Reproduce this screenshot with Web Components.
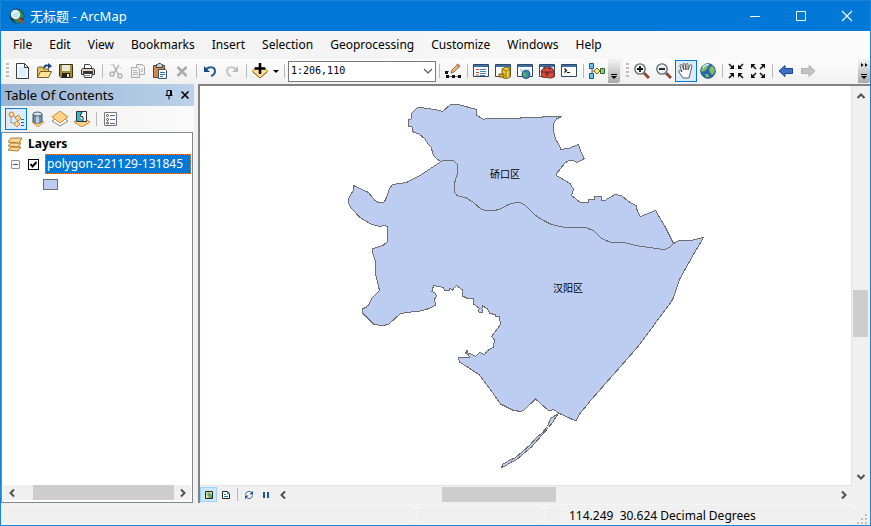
<!DOCTYPE html>
<html lang="zh">
<head>
<meta charset="utf-8">
<title>无标题 - ArcMap</title>
<style>
html, body { height: 100%; margin: 0; }
body { font: 12px/20px "Noto Sans", "Noto Sans CJK SC", sans-serif; color: #000; background: #f0f0f0; }
</style>
</head>
<body>
<app-window></app-window>
<script>
const D = (inner) => `<path d="M1 1h14v13H1z" fill="#fff"/><path d="M1 1h14v3H1z" fill="#3c6fae"/><path d="M.500 1.500h15v12h-15z" fill="none" stroke="#31465f"/>${inner}`;
const CYL = '<path d="M3 3v7c0 3 9 3 9 0V3" fill="#6d8bab" stroke="#44566c"/><path d="M6 4v8h3V4" fill="#b9cee2"/><ellipse cx="7.500" cy="3" rx="4.500" ry="2" fill="#d9e6f2" stroke="#44566c"/>';
const ICONS = {
  app: '<circle cx="8" cy="8" r="7.500" fill="#174e63"/><path d="M3 2l5 1 4-1 3 6-3 6-4 1-5-4z" fill="#318758"/><path d="M1 7l4-1 1 6-3 1zM10 9l4 2-3 3z" fill="#103654"/><path d="M9 9l5 6" stroke="#c7452d" stroke-width="2"/><circle cx="6.500" cy="6.500" r="4" fill="#b8e7ed" stroke="#e9f5f1" stroke-width="1.500"/><path d="M4 6c1-2 3-2 4-2" stroke="#fff" fill="none"/>',
  new: '<path d="M2.500.500h8l4 4v11h-12z" fill="#f4fbff" stroke="#383c45"/><path d="M5 4h7v10H5z" fill="#dceefb"/><path d="M10.500.500v4h4z" fill="#fff" stroke="#383c45"/>',
  open: '<path d="M1.500 14V5l1-1h4l1 2h5v3" fill="#e6c263" stroke="#795c22"/><path d="M1.500 14.500l3-6h11l-3 6z" fill="#ffe397" stroke="#795c22"/><path d="M8 5c1-3 3-3 4-2" fill="none" stroke="#19446f" stroke-width="2"/><path d="M12 0l4 3-4 3z" fill="#19446f"/>',
  save: '<path d="M1.500 1.500h13v13H3l-1.500-1.500z" fill="#a48d33" stroke="#38330f"/><path d="M4 2h8v6H4z" fill="#e9e7dc"/><path d="M4 10h8v5H4z" fill="#272319"/><path d="M9 11h2v3H9z" fill="#ebe6cd"/>',
  print: '<path d="M4.500 6V1.500h5l2 2V6" fill="#fff" stroke="#444"/><path d="M1.500 6.500l1-1h11l1 1v5h-13z" fill="#d7d3ca" stroke="#302f2c"/><path d="M3 8h10v2H3z" fill="#353535"/><path d="M3.500 10.500h9l-1 4h-7z" fill="#fff" stroke="#353535"/><path d="M5 12.500h5" stroke="#6f8290"/><path d="M12 7h2" stroke="#d28a32"/>',
  cut: '<g stroke="#b3b3b3" fill="none" stroke-width="1.500"><path d="M5 1l5 10M11 2L6 10"/><circle cx="4" cy="11" r="2"/><circle cx="12" cy="13" r="2"/></g><path d="M2 2h2M12 5h2" stroke="#d0d0d0"/>',
  copy: '<g fill="#f0f0f0" stroke="#aaa"><path d="M6.500 1.500h6l2 2v8h-8z"/><path d="M1.500 4.500h6l2 2v8h-8z"/></g><path d="M3 7.500h4M3 9.500h5M3 11.500h5M11 6.500h2M11 8.500h2" stroke="#b5b5b5"/>',
  paste: '<path d="M1.500 2.500h11v12h-11z" fill="#d48b45" stroke="#684325"/><path d="M4.500 3V1.500h1l1-1h2l1 1h1V4.500h-6z" fill="#c7ced4" stroke="#3c4146"/><path d="M6.500 6.500h7l1 1v8h-8z" fill="#fff" stroke="#38516d"/><path d="M8 9.500h5M8 11.500h5M8 13.500h3" stroke="#376eaa"/>',
  del: '<path d="M3.500 4l9 9M12.500 4l-9 9" stroke="#aaa" stroke-width="2.500"/>',
  undo: '<path d="M4 6c4-3 9-2 9 2 0 2-1 4-4 5" fill="none" stroke="#255d96" stroke-width="2"/><path d="M2 3v6h6z" fill="#174c83"/>',
  redo: '<path d="M12 6C8 3 3 4 3 8c0 2 1 4 4 5" fill="none" stroke="#c6c6c6" stroke-width="2"/><path d="M14 3v6H8z" fill="#bdbdbd"/>',
  add: '<path d="M0 8l8-5 8 5-8 7z" fill="#ffdc91" stroke="#cf963e"/><path d="M1 9l7 6 7-6" fill="none" stroke="#93682e"/><path d="M8 0v11M2.500 5.500h11" stroke="#000" stroke-width="2.500"/>',
  edit: '<path d="M1.500 13.500h13M2 10l2-2" fill="none" stroke="#777"/><path d="M0 8h3v3H0zM1 12h3v3H1zM7 12h3v3H7zM13 12h3v3h-3z" fill="#111"/><path d="M6 10l1-3 6-6 2 2-6 6z" fill="#e9b673" stroke="#6c4b31" stroke-width=".7"/><path d="M12.500.500l3 3-1.500 1.500-3-3z" fill="#d97a72"/>',
  table: D('<path d="M3 6.500h3M3 9.500h3M3 12h3" stroke="#d34a36"/><path d="M7 6.500h6M7 8.500h6M7 10.500h6M7 12.500h5" stroke="#477cbd"/>'),
  catalog: D('<path d="M7 6l4-2 4 1v9l-4 2-4-2z" fill="#f1cd32" stroke="#796119"/><path d="M7 6l4 2v7M11 8l4-2" fill="none" stroke="#8e721c"/><path d="M4 11h5v3H4z" fill="#d7a824" stroke="#796119"/>'),
  search: D('<path d="M3 6h10v3H3z" fill="#c8dceb"/><circle cx="9" cy="11.500" r="4" fill="#338ebe" stroke="#23506b"/><path d="M6 9l3 1 1 3-3 1z" fill="#66ad58"/>'),
  toolbox: D('<path d="M2 8l3-3h8l2 3v6l-3 1-9-1z" fill="#d94b3b" stroke="#712c27"/><path d="M5 6V4h6v3M3 9h11M7 9v3h2V9" fill="none" stroke="#5a211d"/>'),
  python: D('<path d="M3.500 5.500l2 2-2 2" fill="none" stroke="#111" stroke-width="1.300"/><path d="M6 9.500h3" stroke="#111"/>'),
  model: '<path d="M3 3v10M3 8h11" fill="none" stroke="#666"/><path d="M.500.500h4v5h-4zM.500 10.500h4v5h-4z" fill="#6ac3ee" stroke="#165a91"/><path d="M5 8l3-3 3 3-3 3z" fill="#ffe28b" stroke="#8d6618"/><path d="M11.500 5.500h4v5h-4z" fill="#8bcd81" stroke="#31612d"/>',
  zoomin: '<path d="M10 10l5 5" stroke="#8f4938" stroke-width="3"/><circle cx="6" cy="6" r="5.200" fill="#e7f2f4" stroke="#646669" stroke-width="1.300"/><path d="M3 6h6M6 3v6" stroke="#111" stroke-width="1.800"/>',
  zoomout: '<path d="M10 10l5 5" stroke="#8f4938" stroke-width="3"/><circle cx="6" cy="6" r="5.200" fill="#e7f2f4" stroke="#646669" stroke-width="1.300"/><path d="M3 6h6" stroke="#111" stroke-width="1.800"/>',
  pan: '<path d="M5 15L1 9c-1-2 1-2 2-1l1 1-2-6c0-2 2-2 2 0l2 4-1-6c1-1 2-1 2 1l1 5V1c1-1 2-1 2 1v5l2-5c1-1 2 0 2 1l-2 8-1 4z" fill="#fff" stroke="#4b4b4b" stroke-width=".9"/>',
  globe: '<circle cx="8" cy="8" r="7.300" fill="#2b64b0" stroke="#315e82"/><path d="M4 2l4-1 0 3-2 3-4 2-1-2zM10 4l3-1 2 4-2 5-2-1-2-4zM5 11l3 0 1 3-3 0z" fill="#83bf61"/><path d="M3 5c1-3 4-4 6-3" fill="none" stroke="#cbeaf9" stroke-width="1.500"/>',
  zin: '<g fill="#111"><path d="M6 1.500V6H1.500zM10 1.500V6h4.500zM6 14.500V10H1.500zM10 14.500V10h4.500z"/></g><path d="M1 1l4 4M15 1l-4 4M1 15l4-4M15 15l-4-4" stroke="#111" stroke-width="1.500"/>',
  zout: '<g fill="#111"><path d="M1 1h4.500L1 5.500zM15 1h-4.500L15 5.500zM1 15h4.500L1 10.500zM15 15h-4.500l4.500-4.500z"/></g><path d="M2 2l4 4M14 2l-4 4M2 14l4-4M14 14l-4-4" stroke="#111" stroke-width="1.500"/>',
  back: '<path d="M1 8l6-5.500v3h7.500v5H7v3z" fill="#3c70c8" stroke="#1d458f"/>',
  fwd: '<path d="M15 8L9 2.500v3H1.500v5H9v3z" fill="#c3c3c3" stroke="#b1b1b1"/>',
  drawing: '<path d="M3 4v8h5M5 5l5 2" fill="none" stroke="#999"/><circle cx="3.500" cy="3.500" r="2.500" fill="#ffd695" stroke="#c78938"/><path d="M7 7l3-3 3 3-3 3zM6 13l3-3 3 3-3 3z" fill="#ffd695" stroke="#c78938"/><path d="M13 8.500h3M13 11.500h3M13 14.500h3" stroke="#255da0"/>',
  source: '<path d="M2 11l6-2 6 2-6 5z" fill="#ffd582" stroke="#d29a44"/>' + CYL,
  visible: '<path d="M0 10l8-5 8 5-8 5z" fill="#fff" stroke="#888"/><path d="M0 6l8-6 8 6-8 6z" fill="#ffd28a" stroke="#c98c39"/>',
  select: '<path d="M0 11l8-5 8 5-8 5z" fill="#ffd28a" stroke="#c98c39"/><path d="M2.500.500h10v10h-10z" fill="#fff" stroke="#333"/><path d="M3 1h5L6 6l3 4H3z" fill="#35bad1"/><path d="M8 1L6 5l3 1v4" fill="none" stroke="#222"/>',
  options: '<path d="M2.500 1.500h12v13h-12z" fill="#fff" stroke="#777"/><g fill="none" stroke="#444"><circle cx="5.500" cy="4.500" r="1"/><circle cx="5.500" cy="8.500" r="1"/><circle cx="5.500" cy="12" r="1"/></g><path d="M8 4.500h5M8 8.500h5M8 12.500h5" stroke="#4777aa"/>',
  layers: '<g fill="#ffd895" stroke="#b17b33"><path d="M1 14l3-3h10l-3 4z"/><path d="M1 10l3-3h10l-3 4z"/><path d="M1 6l3-4h11l-3 5z"/></g>',
  data: '<path d="M4.500 4.500h7v7h-7z" fill="#dce69b" stroke="#222"/><path d="M6 7l2-2 3 3v3H8z" fill="#70a776"/>',
  page: '<path d="M4.500 4.500h5l2 2v5h-7z" fill="#fff" stroke="#222"/><path d="M9.500 4v3H12M6 7.500h2M6 9.500h4" fill="none" stroke="#2176b7"/>',
  refresh: '<path d="M4.500 7.500C5 4 9.500 3.500 11 6M11.500 8.500c-.5 3.500-5 4-6.500 1.500" fill="none" stroke="#1f4f82"/><path d="M12 4v3.500H8.500zM4 12V8.500h3.500z" fill="#1f4f82"/>',
  pause: '<path d="M5 5h2v6H5zM9 5h2v6H9z" fill="#1854a8"/>',
  pin: '<path d="M6 8.500V3.500h4.500v5M4.500 8.500h7M8 9v3.500M9.500 4v4" fill="none" stroke="#000"/>',
  close: '<path d="M4.500 4.500l7 7M11.500 4.500l-7 7" stroke="#000" stroke-width="1.600"/>',
  min: '<path d="M3 8.500h10" stroke="#fff"/>',
  max: '<path d="M3.500 3.500h9v9h-9z" fill="none" stroke="#fff"/>',
  exit: '<path d="M3 3l10 10M13 3L3 13" stroke="#fff" stroke-width="1.200"/>',
  left: '<path d="M10 4.500L6.500 8l3.500 3.500" fill="none" stroke="#505050" stroke-width="2"/>',
  right: '<path d="M6 4.500L9.500 8 6 11.500" fill="none" stroke="#505050" stroke-width="2"/>',
  up: '<path d="M4.500 10L8 6.500l3.500 3.500" fill="none" stroke="#505050" stroke-width="2"/>',
  down: '<path d="M4.500 6L8 9.500 11.500 6" fill="none" stroke="#505050" stroke-width="2"/>',
  chevron: '<path d="M4 6l4 4 4-4" fill="none" stroke="#555" stroke-width="1.200"/>',
  caret: '<path d="M5 7h6l-3 3z" fill="#000"/>',
  more: '<path d="M5 11.500h6" stroke="#000"/><path d="M5 13h6l-3 3z" fill="#000"/>',
  chevmore: '<path d="M5 0l2.500 2L5 4zM9 0l2.500 2L9 4z" fill="#000"/><path d="M5 11.500h6" stroke="#000"/><path d="M5 13h6l-3 3z" fill="#000"/>'
};

function define(name, css, html) {
  customElements.define(name, class extends HTMLElement {
    constructor() { super(); this.attachShadow({ mode: 'open' }); }
    connectedCallback() {
      const body = typeof html === 'function' ? html(this) : html;
      this.shadowRoot.innerHTML = `<style>*{box-sizing:border-box}${css}</style>${body}`;
    }
  });
}
const attr = (el, n, d = '') => el.getAttribute(n) ?? d;

define('app-icon', ':host{display:block;flex:none;width:16px;height:16px}svg{display:block;width:100%;height:100%}',
  el => `<svg viewBox="0 0 16 16" aria-hidden="true">${ICONS[attr(el, 'name')]}</svg>`);

define('tool-button', `
  :host{display:block;flex:none;width:22px;height:22px}
  button{width:100%;height:100%;padding:0;border:1px solid transparent;background:none;display:grid;place-content:center;overflow:hidden}
  :host([active]) button{background:#dcebf9;border-color:#0078d7}
  :host([narrow]){width:10px}
  :host([small]){width:17px;height:15px}
  :host([small][active]) button{background:#cce8ff;border-color:#99d1ff}
  :host([caption]){width:16px}
  :host([window]){width:46px;height:100%}`,
  el => `<button type="button" aria-label="${attr(el, 'label')}" ${el.hasAttribute('off') ? 'disabled' : ''}><app-icon name="${attr(el, 'icon')}"></app-icon></button>`);

define('tool-rule', ':host{display:block;flex:none;width:6px;height:14px}i{display:block;width:1px;height:100%;margin:0 auto;background:#b9b9b9}', '<i></i>');

define('tool-overflow', `
  :host{display:block;flex:none;width:12px;align-self:stretch}
  button{width:100%;height:100%;padding:0;border:0;border-radius:0 3px 3px 0;background:linear-gradient(#f4f4f4,#a9a9a9);display:grid;place-content:center;overflow:hidden}`,
  el => `<button type="button" aria-label="Toolbar options"><app-icon name="${attr(el, 'icon')}"></app-icon></button>`);

define('tool-bar', `
  :host{display:flex;align-items:center;min-width:0;height:24px;background:linear-gradient(#fcfcfc,#f1f1f1);border-radius:3px}
  :host([grow]){flex:1}
  .grip{flex:none;width:3px;height:16px;margin:0 2px 0 3px;background:repeating-linear-gradient(#bdbdbd 0 2px,transparent 2px 4px)}
  .items{display:flex;align-items:center;flex:1;min-width:0;overflow:hidden}`,
  '<span class="grip"></span><div class="items"><slot></slot></div><slot name="end"></slot>');

define('scale-box', `
  :host{display:grid;flex:none;width:149px;height:22px;padding-left:1px;box-sizing:border-box;align-items:center}
  select,app-icon{grid-area:1/1}
  select{appearance:none;width:100%;height:21px;border:1px solid #7a7a7a;border-radius:0;background:#fff;padding:0 20px 0 2px;margin:0;font:10px/18px "DejaVu Sans Mono",monospace;color:#000}
  app-icon{justify-self:end;pointer-events:none}`,
  '<select aria-label="Map scale"><option>1:206,110</option></select><app-icon name="chevron"></app-icon>');

define('title-bar', `
  :host{display:flex;align-items:center;height:30px;background:#0078d7;color:#fff;padding-left:8px}
  h1{flex:1;margin:0 0 0 5px;font:inherit;font-size:13px}`,
  `<app-icon name="app"></app-icon><h1>无标题 - ArcMap</h1>
   <tool-button window icon="min" label="Minimize"></tool-button><tool-button window icon="max" label="Maximize"></tool-button><tool-button window icon="exit" label="Close"></tool-button>`);

define('menu-bar', `
  :host{display:flex;align-items:center;gap:1px;height:28px;padding-left:4px;background:linear-gradient(90deg,#f0f0f0,#fbfbfb)}
  button{border:0;background:none;padding:0 8px;margin:0;font:inherit;color:inherit}`,
  ['File', 'Edit', 'View', 'Bookmarks', 'Insert', 'Selection', 'Geoprocessing', 'Customize', 'Windows', 'Help'].map(t => `<button type="button">${t}</button>`).join(''));

define('scroll-track', `
  :host{display:flex;align-items:center;min-width:0;min-height:0;background:#f0f0f0}
  button{flex:none;padding:0;border:0;background:none;display:grid;width:17px;height:15px;place-content:center;overflow:hidden}
  :host([vertical]){flex-direction:column}
  :host([vertical]) button{width:15px;height:19px}
  .track{flex:1;display:flex;align-self:stretch;min-width:0;min-height:0}
  :host([vertical]) .track{flex-direction:column}
  .thumb{background:#cdcdcd}`,
  el => {
    const [a, b, c] = attr(el, 'parts').split(' ');
    const v = el.hasAttribute('vertical');
    return `<button type="button" aria-label="Scroll back"><app-icon name="${v ? 'up' : 'left'}"></app-icon></button>
      <div class="track"><span style="flex:${a}"></span><span class="thumb" style="flex:${b}"></span><span style="flex:${c}"></span></div>
      <button type="button" aria-label="Scroll on"><app-icon name="${v ? 'down' : 'right'}"></app-icon></button>`;
  });

define('toc-panel', `
  :host{display:flex;flex-direction:column;min-height:0}
  header{display:flex;align-items:center;height:22px;background:linear-gradient(90deg,#99b4d1,#b9d1ea);padding:0 1px 0 4px}
  h2{flex:1;margin:0;font:inherit;font-size:13px}
  .tools{display:flex;align-items:center;height:26px;padding-left:4px;background:linear-gradient(90deg,#f0f0f0,#fafafa)}
  .tree{flex:1;display:flex;flex-direction:column;margin-right:1px;border:1px solid #828790;background:#fff;min-height:0;padding:1px 1px 2px;overflow:hidden}
  ul{flex:1;list-style:none;margin:0;padding:0;min-height:0}
  li{display:flex;align-items:center;height:20px}
  .root{padding-left:4px;gap:5px;font-weight:bold}
  .layer{padding-left:8px}
  .fold{flex:none;width:9px;height:9px;padding:0;border:1px solid #919191;border-radius:1px;background:linear-gradient(#315aa5,#315aa5) center/5px 1px no-repeat #f7f7f7}
  label{display:flex;align-items:center;flex:1;margin-left:8px;min-width:0}
  input{flex:none;appearance:none;width:11px;height:11px;border:1px solid #000;margin:0 6px 0 0;background:#fff}
  input:checked{background:#fff url("data:image/svg+xml,%3Csvg xmlns='http://www.w3.org/2000/svg' viewBox='0 0 9 9'%3E%3Cpath d='M1.500 4l2 2.500L7.500 2' fill='none' stroke='black' stroke-width='2'/%3E%3C/svg%3E")}
  label span{flex:1;height:20px;line-height:18px;background:#0078d7;color:#fff;border:1px dotted #ff8728;padding-left:1px;white-space:nowrap}
  .symbol{padding-left:40px}
  .symbol i{width:15px;height:11px;background:#bdcdf1;border:1px solid #6e6e6e}
  scroll-track{height:15px}`,
  `<header><h2>Table Of Contents</h2><tool-button caption icon="pin" label="Auto hide"></tool-button><tool-button caption icon="close" label="Close panel"></tool-button></header>
   <div class="tools"><tool-button active icon="drawing" label="List by drawing order"></tool-button><tool-button icon="source" label="List by source"></tool-button><tool-button icon="visible" label="List by visibility"></tool-button><tool-button icon="select" label="List by selection"></tool-button><tool-rule></tool-rule><tool-button icon="options" label="Options"></tool-button></div>
   <div class="tree"><ul>
     <li class="root"><app-icon name="layers"></app-icon>Layers</li>
     <li class="layer"><button class="fold" type="button" aria-label="Collapse"></button><label><input type="checkbox" checked><span>polygon-221129-131845</span></label></li>
     <li class="symbol"><i></i></li></ul>
     <scroll-track parts="13 141 0"></scroll-track></div>`);

const BORDER = '443.500 160.500 453.500 160.500 457 164 457.500 173.500 455 181.500 454.500 192.500 457 195.500 466.500 198 473.500 202.500 481.500 209.500 486.500 210.500 493.500 210.500 499.500 209.500 508.500 204.500 515.500 202.500 521 203 525 205 535 215 543.500 220.500 551.500 224.500 565 227.500 585.500 227.500 593.500 230.500 601.500 238.500 610 242 623.500 242.500 638.500 246 660 249 665 249.500 670 247 673.500 243.500';
const flip = s => s.split(' ').reduce((a, v, i, all) => (i % 2 ? a : [[v, all[i + 1]], ...a]), []).flat().join(' ');
const NORTH = '441 161.500 437 159 433.500 155.500 431 147 428 144 425 139 419 134 412 131.500 412 127 408.500 126 408.500 119.500 411.500 119 411 114 417 108 420 107.500 435 109.500 442.500 111.500 450 105 458 104.500 477 109.500 476.500 115 483.500 119.500 486.500 118.500 520 118.500 520 117.500 542 117.500 542 116.500 561.500 116.500 556.500 119 553.500 123.500 553.500 131.500 556 140 560 146.500 560.500 149.500 568.500 148.500 578.500 144.500 581.500 153.500 584.500 158.500 577.500 162.500 572.500 160.500 568.500 160.500 564.500 163.500 556.500 173.500 556.500 175.500 570 183.500 573.500 189 571.500 195.500 580.500 202.500 588.500 202.500 588.500 199.500 594.500 199.500 594.500 196.500 601.500 196.500 601.500 200.500 604 201 615 194.500 621.500 195.500 628.500 201.500 636 205.500 637.500 211.500 640.500 216.500 655.500 210.500 665 226.500 673.500 243.500 ' + flip(BORDER);
const SOUTH = '441 161.500 ' + BORDER + ' 679 240.500 690.500 240.500 703.500 237.500 693.500 254.500 680 278.500 672.500 300 638.500 346 591.500 399.500 580 413.500 576 421 559.500 413.500 553.500 409.500 549 411 535.500 399 524 410 521.500 411.500 513.500 410.500 500.500 404 490 389 479.500 375 467.500 367 459.500 362 458.500 357.500 469.500 357.500 468.500 354.500 465.500 353.500 467 350.500 468 353 472 354.500 475.500 356.500 479.500 352.500 484.500 354.500 487 351 493.500 347 494.500 340 491.500 336.500 500.500 324.500 499.500 316.500 495 316 495 314.500 490 313.500 487.500 309 482.500 305.500 482 308.500 482.500 312.500 479.500 313 478 310 479.500 308.500 473.500 304 473.500 298.500 467.500 298.500 462.500 296 463 290.500 456.500 285.500 452.500 290 450 288.500 449 290.500 444.500 291 443.500 287.500 438 286.500 433.500 285.500 432 291.500 435.500 293.500 436.500 296.500 434.500 299 435.500 305.500 426.500 309.500 420 311 411.500 312 400.500 313.500 388.500 324.500 382.500 325.500 374 324.500 362.500 313 362.500 309 367.500 306.500 372.500 297.500 379.500 290.500 376 276 375 260 372.500 252 372.500 249 383.500 245 387.500 241.500 387.500 227 385 225.500 380 226.500 371.500 224.500 360 217.500 351.500 208.500 348.500 203.500 348.500 198.500 353.500 190 353.500 185.500 368.500 192.500 375 200.500 378.500 202.500 383.500 202.500 385.500 200 389.500 188.500 392.500 184.500 406.500 182.500 420 175.500';
const TAIL = '558.500 413.500 550.500 418.500 547.500 426.500 542 433 537 437 530 445 515 458 510 460 502.500 464.500 501.500 467.500 506 465.500 511.500 462 516 460 532 446.500 541.500 435.500 548.500 427.500 552.500 422.500 556.500 416';

define('map-view', `
  :host{display:grid;grid-template:minmax(0,1fr) 15px / minmax(0,1fr) 15px;gap:1px;min-width:0;min-height:0;border:solid #828282;border-width:2px 0 0 2px;background:#f0f0f0;padding:0 2px 1px 0}
  .canvas{display:block;width:100%;height:100%;background:#fff;border:solid #e3e3e3;border-width:0 1px 1px 0}
  polygon{fill:#bdcdf1;stroke:#6e6e6e;shape-rendering:crispEdges}
  text{font:10px "Noto Sans CJK SC",sans-serif;fill:#000}
  .foot{display:flex;align-items:center;min-width:0}
  .foot scroll-track{flex:1}
  .foot tool-rule{height:13px}`,
  `<svg class="canvas" viewBox="200 86 651 398" preserveAspectRatio="xMidYMin" role="img" aria-label="Map of districts">
     <polygon points="${NORTH}"/><polygon points="${SOUTH}"/><polygon points="${TAIL}"/>
     <text x="490" y="178">硚口区</text><text x="553" y="292">汉阳区</text></svg>
   <scroll-track vertical parts="187 47 131"></scroll-track>
   <div class="foot"><tool-button small active icon="data" label="Data view"></tool-button><tool-button small icon="page" label="Layout view"></tool-button><tool-rule></tool-rule><tool-button small icon="refresh" label="Refresh"></tool-button><tool-button small icon="pause" label="Pause drawing"></tool-button><scroll-track parts="151 114 279"></scroll-track></div>`);

define('status-bar', `
  :host{display:flex;align-items:stretch;height:22px;background:#f0f0f0;gap:2px;padding-top:1px}
  .cell{border:1px solid #f5f5f5;flex:none}
  .rest{flex:1}.mid{width:126px}.thin{width:20px}
  .pos{width:288px;padding-left:2px;line-height:21px;white-space:pre}
  svg{width:14px;align-self:end;height:12px;fill:#bfbfbf}`,
  `<div class="cell rest"></div><div class="cell mid"></div><div class="cell thin"></div><div class="cell pos">114.249  30.624 Decimal Degrees</div>
   <svg viewBox="0 0 14 12" aria-hidden="true"><path d="M9 1h2v2H9zM5 5h2v2H5zM9 5h2v2H9zM1 9h2v2H1zM5 9h2v2H5zM9 9h2v2H9z"/></svg>`);

const tools = s => s.split(' ').map(n => {
  if (n === '|') return '<tool-rule></tool-rule>';
  if (n === 'scale') return '<scale-box></scale-box>';
  return `<tool-button icon="${n}" label="${n}" ${n === 'caret' ? 'narrow' : ''} ${n === 'pan' ? 'active' : ''} ${/^(cut|copy|del|redo|fwd)$/.test(n) ? 'off' : ''}></tool-button>`;
}).join('');

define('app-window', `
  :host{display:flex;flex-direction:column;height:100%;box-sizing:border-box;border:1px solid #1883d7;background:#f0f0f0;overflow:hidden}
  .bars{display:flex;gap:3px;padding:0 0 1px 2px;background:#f0f0f0}
  main{flex:1;display:grid;grid-template-columns:193px minmax(0,1fr);gap:4px;min-height:0}`,
  `<title-bar></title-bar><menu-bar></menu-bar>
   <div class="bars"><tool-bar>${tools('new open save print | cut copy paste del | undo redo | add caret | scale | edit | table catalog search toolbox python | model')}<tool-overflow slot="end" icon="more"></tool-overflow></tool-bar>
   <tool-bar grow>${tools('zoomin zoomout pan globe | zin zout | back fwd')}<tool-overflow slot="end" icon="chevmore"></tool-overflow></tool-bar></div>
   <main><toc-panel></toc-panel><map-view></map-view></main><status-bar></status-bar>`);
</script>
</body>
</html>
